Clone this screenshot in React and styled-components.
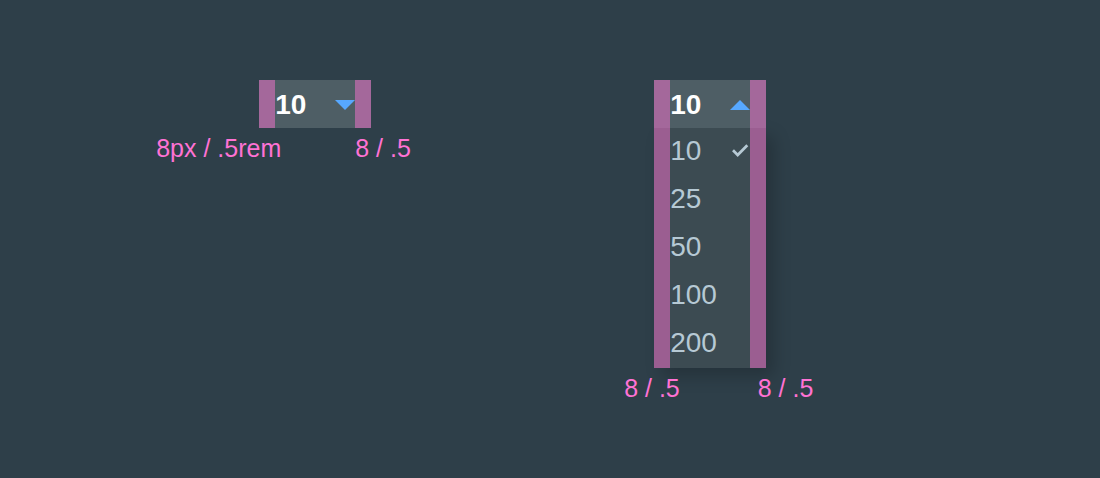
import React from "react";
import styled, { createGlobalStyle, css } from "styled-components";

const GlobalStyle = createGlobalStyle`
  *, *::before, *::after { box-sizing: border-box; }
  body {
    margin: 0;
    min-height: 100vh;
    background: #2e3f49;
    font-family: "Liberation Sans", Arial, sans-serif;
  }
`;

const Page = styled.main`
  display: flex;
  align-items: flex-start;
  gap: 22.6%;
  padding: 80px 0 76px 14.2%;
`;

const Figure = styled.figure`
  flex: none;
  margin: 0;
`;

const Dropdown = styled.div`
  position: relative;
  width: 112px;
  margin-left: ${(p) => p.$indent};
`;

const Field = styled.div`
  position: relative;
  height: 48px;
`;

const Select = styled.select`
  appearance: none;
  display: block;
  width: 100%;
  height: 48px;
  margin: 0;
  padding: 2px 16px 0;
  border: 0;
  border-radius: 0;
  outline: 0;
  background: #4e5e65;
  color: #fff;
  font: bold 28px/46px "Liberation Sans", Arial, sans-serif;
`;

const Arrow = styled.svg`
  position: absolute;
  top: 20px;
  right: 16px;
  width: 20px;
  height: 10px;
  fill: #57a8ff;
  pointer-events: none;
  ${(p) => p.$open && css`transform: rotate(180deg);`}
`;

const Options = styled.ul`
  margin: 0;
  padding: 0;
  list-style: none;
  background: #3c4b52;
  box-shadow: 8px 8px 16px rgba(0, 0, 0, 0.2);
`;

const Option = styled.button`
  display: flex;
  align-items: center;
  justify-content: space-between;
  width: 100%;
  height: 48px;
  padding: 0 16px 2px;
  border: 0;
  background: transparent;
  color: #b6c9d4;
  font: 28px/46px "Liberation Sans", Arial, sans-serif;
`;

const Check = styled.svg`
  width: 20px;
  height: 20px;
  fill: none;
  stroke: #b6c9d4;
  stroke-width: 2.7;
`;

const Gutter = styled.span`
  position: absolute;
  top: 0;
  bottom: 0;
  ${(p) => p.$side}: 0;
  width: 16px;
  background: #ff72d4;
  opacity: 0.49;
  pointer-events: none;
`;

const Captions = styled.figcaption`
  position: relative;
  display: flex;
  gap: ${(p) => p.$gap};
  padding-top: 6px;
  color: #ff72d4;
  font-size: 25px;
  line-height: 28px;
  white-space: nowrap;
`;

const sizes = [10, 25, 50, 100, 200];

function PageSize({ open, indent, label }) {
  return (
    <Dropdown $indent={indent}>
      <Field>
        <Select aria-label={label} defaultValue={10}>
          {sizes.map((n) => (
            <option key={n} value={n}>{n}</option>
          ))}
        </Select>
        <Arrow $open={open} viewBox="0 0 20 10" aria-hidden="true">
          <path d="M0 0H20L10 10Z" />
        </Arrow>
      </Field>
      {open && (
        <Options>
          {sizes.map((n) => (
            <li key={n}>
              <Option type="button" aria-pressed={n === 10}>
                {n}
                {n === 10 && (
                  <Check viewBox="0 0 20 20" aria-hidden="true">
                    <path d="M3 9.3L7.7 14L17.3 4.2" />
                  </Check>
                )}
              </Option>
            </li>
          ))}
        </Options>
      )}
      <Gutter $side="left" />
      <Gutter $side="right" />
    </Dropdown>
  );
}

export default function App() {
  return (
    <>
      <GlobalStyle />
      <Page>
        <Figure>
          <PageSize indent="103px" label="Items per page" />
          <Captions $gap="74px">
            <span>8px / .5rem</span>
            <span>8 / .5</span>
          </Captions>
        </Figure>
        <Figure>
          <PageSize open indent="30px" label="Items per page, open" />
          <Captions $gap="78px">
            <span>8 / .5</span>
            <span>8 / .5</span>
          </Captions>
        </Figure>
      </Page>
    </>
  );
}
